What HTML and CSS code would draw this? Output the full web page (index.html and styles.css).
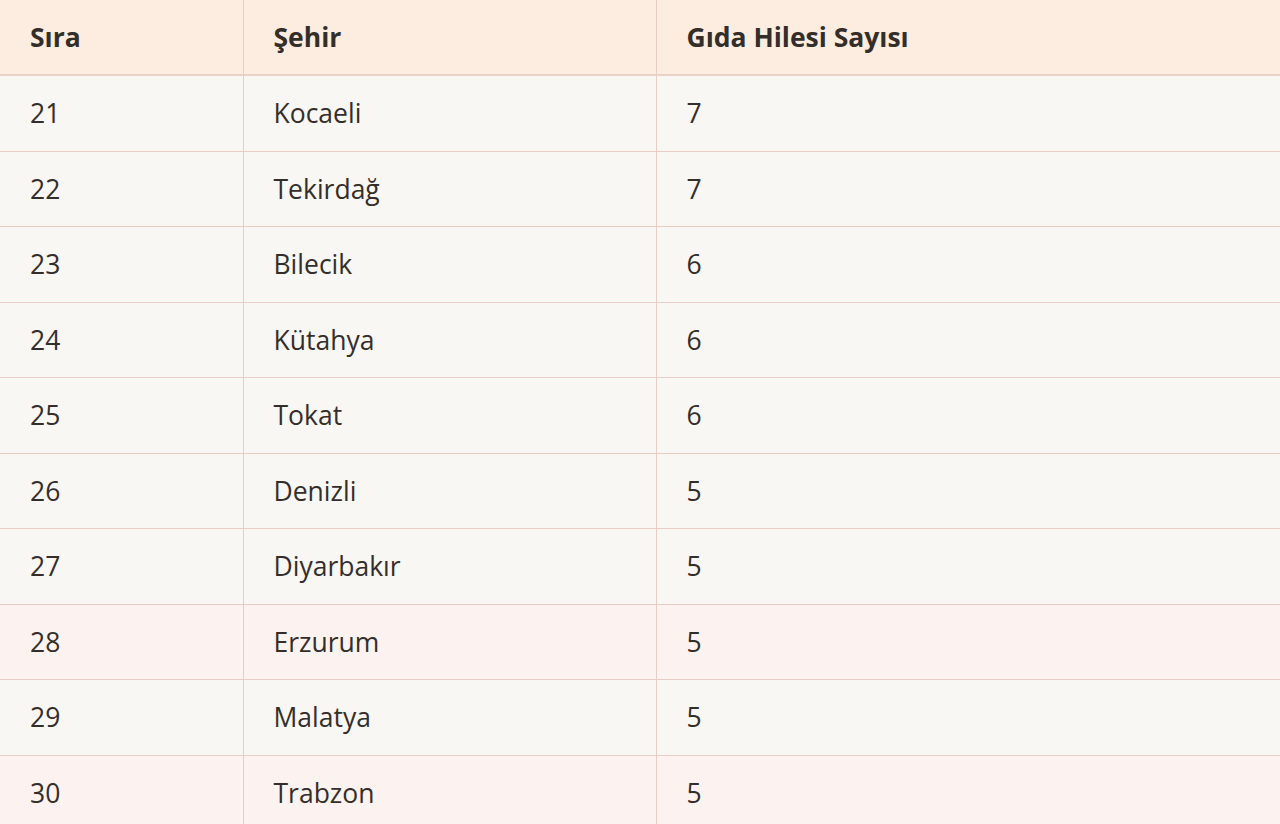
FILE: index.html
```html
<!DOCTYPE html>
<html lang="tr">
<head>
<meta charset="utf-8">
<link rel="stylesheet" href="styles.css">
</head>
<body>
<table class="tbl">
  <colgroup>
    <col class="c1"><col class="c2"><col class="c3">
  </colgroup>
  <thead>
    <tr class="head"><th>Sıra</th><th>Şehir</th><th>Gıda Hilesi Sayısı</th></tr>
  </thead>
  <tbody>
    <tr><td>21</td><td>Kocaeli</td><td>7</td></tr>
    <tr><td>22</td><td>Tekirdağ</td><td>7</td></tr>
    <tr><td>23</td><td>Bilecik</td><td>6</td></tr>
    <tr><td>24</td><td>Kütahya</td><td>6</td></tr>
    <tr><td>25</td><td>Tokat</td><td>6</td></tr>
    <tr><td>26</td><td>Denizli</td><td>5</td></tr>
    <tr><td>27</td><td>Diyarbakır</td><td>5</td></tr>
    <tr class="pink"><td>28</td><td>Erzurum</td><td>5</td></tr>
    <tr><td>29</td><td>Malatya</td><td>5</td></tr>
    <tr class="pink"><td>30</td><td>Trabzon</td><td>5</td></tr>
  </tbody>
</table>
</body>
</html>
```
FILE: styles.css
```css
html, body {
  margin: 0;
  padding: 0;
  background: #f9f7f4;
  overflow: hidden;
}
.tbl {
  width: 1280px;
  border-collapse: collapse;
  table-layout: fixed;
  font-family: "Open Sans", "Liberation Sans", sans-serif;
  color: #342e2b;
  font-size: 26.5px;
}
.c1 { width: 243px; }
.c2 { width: 413px; }
.tbl th, .tbl td {
  text-align: left;
  padding: 0 0 0 30px;
  line-height: 1;
  border-right: 1px solid #e6cdc5;
  border-bottom: 1px solid #e8cdc4;
}
.tbl th:last-child, .tbl td:last-child { border-right: none; }
.head th {
  height: 74px;
  background: #fdede0;
  font-weight: 700;
  border-bottom: 2px solid #ebd0c6;
}
.tbl td {
  height: 74.5px;
  background: #f9f7f4;
}
.tbl tr.pink td { background: #fcf3f0; }
```
